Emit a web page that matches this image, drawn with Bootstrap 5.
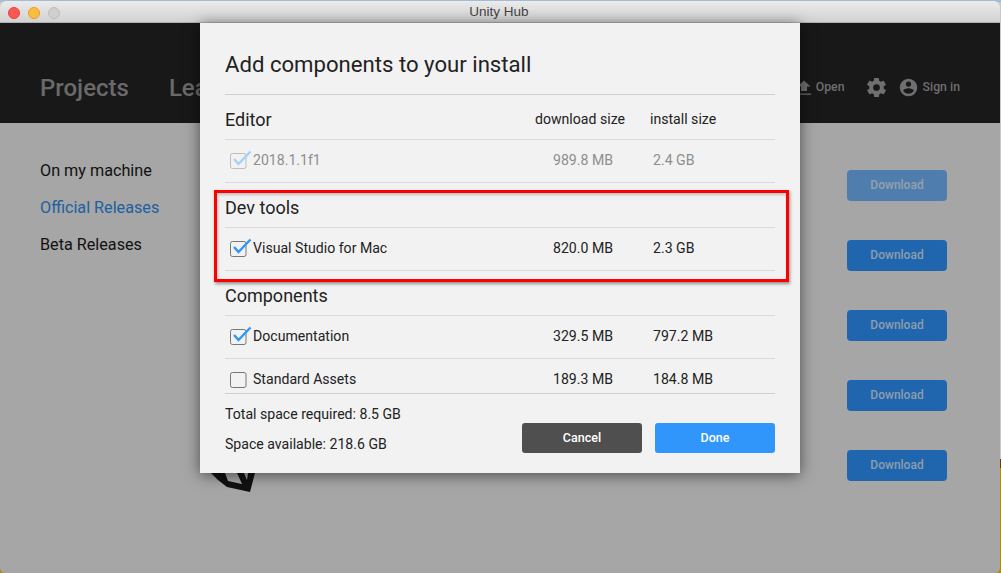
<!DOCTYPE html>
<html lang="en">
<head>
    <meta charset="UTF-8">
    <title>Unity Hub</title>
    <link href="https://cdn.jsdelivr.net/npm/bootstrap@5.3.0/dist/css/bootstrap.min.css" rel="stylesheet">
    <style>
        html, body { height: 100%; overflow: hidden; }
        body { background: linear-gradient(#a3bbd3 0 2px, #c8c8c8 2px 459px, #5c3f1c 459px 468px, #a88a1e 468px); font-family: Roboto, "Liberation Sans", sans-serif; color: #222; font-size: 14px; }
        .hub-window { position: relative; width: 1000px; height: 572px; margin-top: 1px; border-radius: 6px 6px 5px 5px; overflow: hidden; background: #a6a6a6; }
        .hub-titlebar { height: 22px; background: linear-gradient(#ebebeb, #d2d2d2); border-bottom: 1px solid #b1b1b1; font-family: "Liberation Sans", sans-serif; font-size: 13.5px; color: #444; padding-right: 2px; padding-top: 1px; }
        .tl-dots { position: absolute; left: 8px; top: 6px; gap: 8px; }
        .tl-dot { width: 12px; height: 12px; border-radius: 50%; }
        .tl-red { background: #fc5753; border: 1px solid #e0443e; }
        .tl-yellow { background: #fdbc40; border: 1px solid #dea123; }
        .tl-grey { background: #cfcfcf; border: 1px solid #bcbcbc; }
        .hub-header { height: 100px; background: #181818; padding: 29px 40px 0; }
        .hub-tab { font-size: 24px; font-weight: 500; color: #6a6a6a; margin-right: 40px; }
        .hub-action { font-size: 12.3px; color: #6f6f6f; font-weight: 500; }
        .open-label { margin: 0 20px 0 4px; }
        .person-icon { margin: 0 4px 0 10px; }
        .hub-body { padding: 0 53px 0 40px; }
        .side-links { padding-top: 29px; font-size: 16.2px; line-height: 37px; color: #111; }
        .side-links .is-current { color: #20609f; }
        .dl-col { padding-top: 47px; gap: 39px; }
        .dl-btn { width: 100px; height: 31px; background: #1f66ae; color: #8f9dab; border-radius: 4px; font-size: 12px; font-weight: 500; padding-bottom: 2px; }
        .dl-btn.is-faded { background: #4f7eae; color: #95a1ad; }
        .unity-mark { position: absolute; left: 208px; top: 472px; }
        .add-dialog { position: absolute; left: 200px; top: 22px; width: 600px; height: 450px; background: #f2f2f2; padding: 0 25px; box-shadow: 0 2px 14px rgba(0,0,0,.55); }
        .add-dialog h1 { font-size: 22.15px; font-weight: 400; line-height: 26px; margin: 0; height: 72px; padding-top: 28px; border-bottom: 1px solid #cfcfcf; color: #222; }
        .comp-scroll { height: 299px; overflow: hidden; border-bottom: 1px solid #cfcfcf; }
        .sect-row { height: 45px; flex: none; border-bottom: 1px solid #d9d9d9; padding-top: 4px; }
        .sect-title { font-size: 18px; }
        .size-head { font-size: 14.1px; padding-top: 1px; }
        .head-dl { width: 115px; }
        .head-in { width: 125px; }
        .comp-row { height: 43px; flex: none; border-bottom: 1px solid #d9d9d9; font-size: 14.1px; }
        .comp-name { padding-left: 4px; }
        .col-dl { width: 100px; }
        .col-in { width: 122px; }
        .is-off { color: #8e8e8e; }
        .tick { flex: none; }
        .foot-info { line-height: 30px; padding-top: 5px; font-size: 14.1px; }
        .foot-btns { gap: 13px; padding-top: 29px; }
        .act-btn { width: 120px; height: 30px; border-radius: 3px; color: #fff; font-size: 12.5px; font-weight: 500; }
        .act-cancel { background: #4f4f4f; }
        .act-done { background: #3096fb; }
        .red-box { position: absolute; left: 14px; top: 167px; width: 575px; height: 92px; border: 3px solid #f00; box-shadow: 1px 2px 3px rgba(0,0,0,.4), inset 1px 2px 3px rgba(0,0,0,.2); }
    </style>
</head>
<body>
<svg class="d-none">
    <symbol id="checked" viewBox="0 0 24 22"><rect x="1.500" y="3.500" width="15.500" height="15" rx="2" fill="none" stroke="#777"/><path d="M5 9l4.500 5L21.500 1.500" fill="none" stroke="#3096fb" stroke-width="2.500"/></symbol>
    <symbol id="checked-off" viewBox="0 0 24 22"><rect x="1.500" y="3.500" width="15.500" height="15" rx="2" fill="none" stroke="#bdbdbd"/><path d="M5 9l4.500 5L21.500 1.500" fill="none" stroke="#a4d2fb" stroke-width="2.500"/></symbol>
    <symbol id="unchecked" viewBox="0 0 24 22"><rect x="1.500" y="3.500" width="15.500" height="15" rx="2" fill="none" stroke="#777"/></symbol>
</svg>
<div class="hub-window">
    <div class="hub-titlebar d-flex align-items-center justify-content-center">
        <div class="tl-dots d-flex">
            <span class="tl-dot tl-red"></span>
            <span class="tl-dot tl-yellow"></span>
            <span class="tl-dot tl-grey"></span>
        </div>
        Unity Hub
    </div>
    <div class="hub-header d-flex align-items-center justify-content-between">
        <div class="d-flex"><span class="hub-tab">Projects</span><span class="hub-tab">Learn</span></div>
        <div class="hub-action d-flex align-items-center">
            <svg width="16" height="16" viewBox="0 0 16 16" fill="#6f6f6f"><path d="M5 11V6.500H1.500L8 0.500l6.500 6H11V11zM1 13.500h14v1.200H1z"/></svg>
            <span class="open-label">Open</span>
            <svg width="23" height="23" viewBox="0 0 24 24" fill="#6f6f6f"><path d="M19.400 13c.04-.3.1-.66.1-1s-.06-.7-.1-1l2.100-1.650c.2-.15.25-.42.12-.64l-2-3.460c-.12-.22-.4-.3-.6-.22l-2.500 1c-.52-.4-1.080-.73-1.700-.98l-.37-2.650A.5.500 0 0 0 14 2h-4a.5.500 0 0 0-.5.420l-.37 2.650c-.62.250-1.180.580-1.700.980l-2.500-1c-.2-.08-.48 0-.6.220l-2 3.460c-.13.220-.07.490.12.640L4.600 11c-.04.300-.1.660-.1 1s.06.700.1 1l-2.100 1.650c-.2.150-.25.420-.12.640l2 3.460c.12.220.4.300.6.220l2.500-1c.52.400 1.080.730 1.700.980l.37 2.650c.04.240.25.420.5.420h4c.25 0 .46-.18.500-.42l.37-2.650c.62-.25 1.180-.58 1.700-.98l2.500 1c.2.08.48 0 .6-.22l2-3.460c.13-.22.07-.49-.12-.64zM12 15.500a3.500 3.500 0 1 1 0-7 3.500 3.500 0 0 1 0 7z"/></svg>
            <svg class="person-icon" width="21" height="21" viewBox="0 0 24 24" fill="#6f6f6f"><path d="M12 2a10 10 0 1 0 0 20 10 10 0 0 0 0-20zm0 3a3 3 0 1 1 0 6 3 3 0 0 1 0-6zm0 14.200a7.200 7.200 0 0 1-6-3.220c.03-1.990 4-3.080 6-3.080s5.970 1.090 6 3.080a7.200 7.200 0 0 1-6 3.220z"/></svg>
            <span>Sign in</span>
        </div>
    </div>
    <div class="hub-body d-flex justify-content-between">
        <div class="side-links">
            <div>On my machine</div>
            <div class="is-current">Official Releases</div>
            <div>Beta Releases</div>
        </div>
        <div class="dl-col d-flex flex-column">
            <div class="dl-btn is-faded d-flex align-items-center justify-content-center">Download</div>
            <div class="dl-btn d-flex align-items-center justify-content-center">Download</div>
            <div class="dl-btn d-flex align-items-center justify-content-center">Download</div>
            <div class="dl-btn d-flex align-items-center justify-content-center">Download</div>
            <div class="dl-btn d-flex align-items-center justify-content-center">Download</div>
        </div>
    </div>
    <svg class="unity-mark" width="50" height="22" viewBox="0 0 50 22"><path d="M3 0l7 7 9 7 23 5 5-19h-7l-1 7-3-7h-7l5 11-14-3-3-8z" fill="#111"/></svg>
    <div class="add-dialog">
        <h1>Add components to your install</h1>
        <div class="comp-scroll d-flex flex-column">
            <div class="sect-row d-flex align-items-center">
                <div class="sect-title flex-grow-1">Editor</div>
                <div class="size-head head-dl">download size</div>
                <div class="size-head head-in">install size</div>
            </div>
            <div class="comp-row is-off d-flex align-items-center">
                <div class="comp-name d-flex align-items-center flex-grow-1"><svg class="tick" width="24" height="22"><use href="#checked-off"/></svg>2018.1.1f1</div>
                <div class="col-dl">989.8 MB</div>
                <div class="col-in">2.4 GB</div>
            </div>
            <div class="sect-row d-flex align-items-center"><div class="sect-title">Dev tools</div></div>
            <div class="comp-row d-flex align-items-center">
                <div class="comp-name d-flex align-items-center flex-grow-1"><svg class="tick" width="24" height="22"><use href="#checked"/></svg>Visual Studio for Mac</div>
                <div class="col-dl">820.0 MB</div>
                <div class="col-in">2.3 GB</div>
            </div>
            <div class="sect-row d-flex align-items-center"><div class="sect-title">Components</div></div>
            <div class="comp-row d-flex align-items-center">
                <div class="comp-name d-flex align-items-center flex-grow-1"><svg class="tick" width="24" height="22"><use href="#checked"/></svg>Documentation</div>
                <div class="col-dl">329.5 MB</div>
                <div class="col-in">797.2 MB</div>
            </div>
            <div class="comp-row d-flex align-items-center">
                <div class="comp-name d-flex align-items-center flex-grow-1"><svg class="tick" width="24" height="22"><use href="#unchecked"/></svg>Standard Assets</div>
                <div class="col-dl">189.3 MB</div>
                <div class="col-in">184.8 MB</div>
            </div>
        </div>
        <div class="d-flex justify-content-between">
            <div class="foot-info">
                <div>Total space required: 8.5 GB</div>
                <div>Space available: 218.6 GB</div>
            </div>
            <div class="foot-btns d-flex">
                <div class="act-btn act-cancel d-flex align-items-center justify-content-center">Cancel</div>
                <div class="act-btn act-done d-flex align-items-center justify-content-center">Done</div>
            </div>
        </div>
        <div class="red-box"></div>
    </div>
</div>
</body>
</html>
